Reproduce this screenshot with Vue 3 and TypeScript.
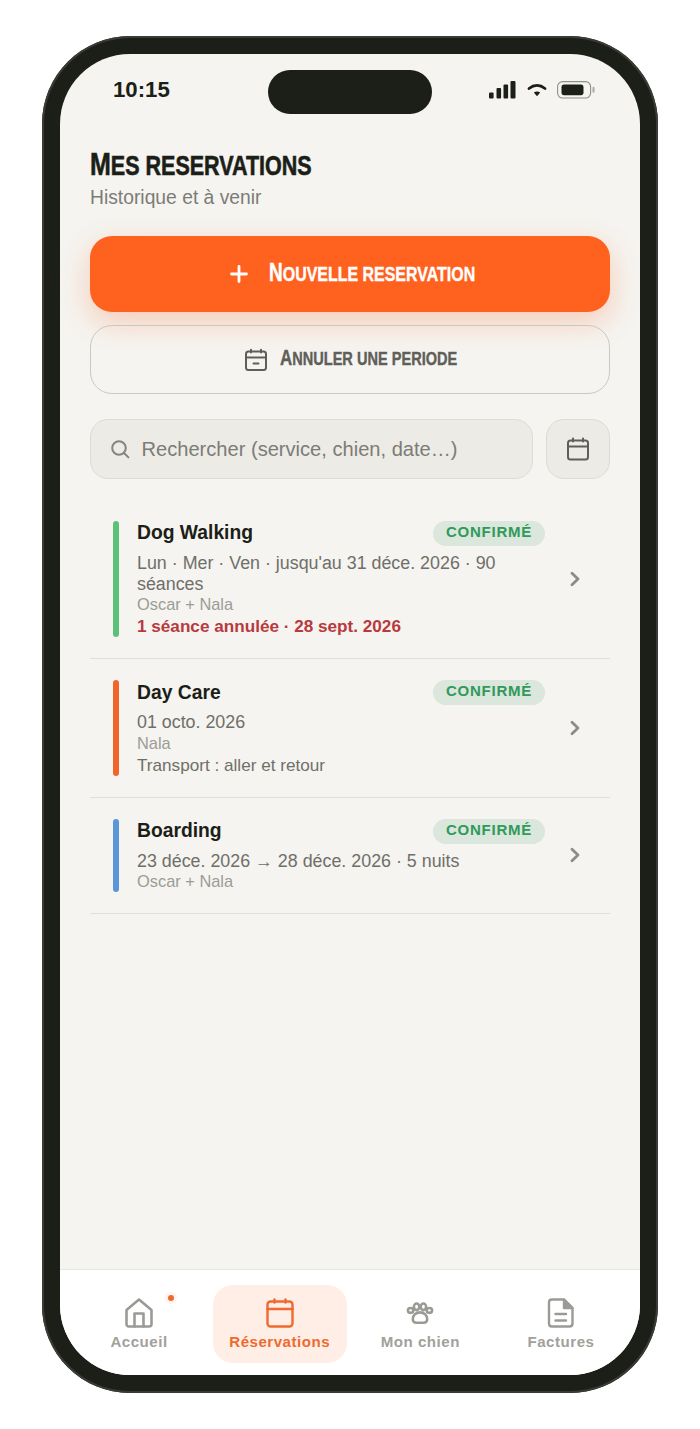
<script setup lang="ts">
interface Booking {
  title: string
  color: string
  lines: { text: string; kind: string }[]
}
const bookings: Booking[] = [
  {
    title: 'Dog Walking',
    color: '#5cc178',
    lines: [
      { text: "Lun · Mer · Ven · jusqu'au 31 déce. 2026 · 90 séances", kind: 'meta' },
      { text: 'Oscar + Nala', kind: 'dog' },
      { text: '1 séance annulée · 28 sept. 2026', kind: 'alert extra' },
    ],
  },
  {
    title: 'Day Care',
    color: '#f0662a',
    lines: [
      { text: '01 octo. 2026', kind: 'meta' },
      { text: 'Nala', kind: 'dog' },
      { text: 'Transport : aller et retour', kind: 'note extra' },
    ],
  },
  {
    title: 'Boarding',
    color: '#5b96d6',
    lines: [
      { text: '23 déce. 2026 → 28 déce. 2026 · 5 nuits', kind: 'meta' },
      { text: 'Oscar + Nala', kind: 'dog' },
    ],
  },
]
</script>

<template>
  <div class="page">
    <div class="phone">
      <div class="island"></div>
      <div class="screen">
        <div class="status">
          <span class="time">10:15</span>
          <div class="status-icons">
            <svg class="sig" width="28" height="18" viewBox="0 0 28 18" fill="#1c1e18">
              <rect x="0" y="11.5" width="4.6" height="6" rx="1" />
              <rect x="7.5" y="7" width="4.6" height="10.5" rx="1" />
              <rect x="14.5" y="3.5" width="4.6" height="14" rx="1" />
              <rect x="21.5" y="0" width="5" height="17.5" rx="1" />
            </svg>
            <svg class="wifi" width="20" height="14" viewBox="0 0 20 14" fill="none">
              <path d="M2 5.5C7 1.4 13 1.4 18 5.5" stroke="#1c1e18" stroke-width="2.8" stroke-linecap="round" />
              <path d="M10 13.2L6.8 9.4C8.8 8.2 11.2 8.2 13.2 9.4Z" fill="#1c1e18" />
            </svg>
            <svg class="batt" width="38" height="18" viewBox="0 0 38 18" fill="none">
              <rect x="0.6" y="0.6" width="33" height="16.4" rx="5" stroke="#8f8f8a" stroke-width="1.1" />
              <rect x="4.5" y="3.6" width="22" height="10.6" rx="2.6" fill="#1c1e18" />
              <rect x="35.5" y="5.8" width="2" height="6" rx="1" fill="#a9a9a4" />
            </svg>
          </div>
        </div>

        <header class="head">
          <h1 class="title"><span class="caps title-in">Mes reservations</span></h1>
          <p class="sub">Historique et à venir</p>
        </header>

        <button class="btn primary">
          <svg width="18" height="18" viewBox="0 0 18 18" fill="none" stroke="#fff" stroke-width="2.8" stroke-linecap="round">
            <path d="M9 1.5V16.5M1.5 9H16.5" />
          </svg>
          <span class="btn-label l1"><span class="caps b1">Nouvelle reservation</span></span>
        </button>

        <button class="btn secondary">
          <svg width="24" height="24" viewBox="0 0 24 24" fill="none" stroke="#5f5f59" stroke-width="2" stroke-linecap="round" stroke-linejoin="round">
            <rect x="2" y="3.5" width="20" height="18.5" rx="2.5" />
            <path d="M2 9.5H22M7 1.8V4.5M17 1.8V4.5M9.5 15.5H14.5" />
          </svg>
          <span class="btn-label l2"><span class="caps b2">Annuler une periode</span></span>
        </button>

        <div class="search-row">
          <div class="search">
            <svg width="20" height="20" viewBox="0 0 20 20" fill="none" stroke="#85857f" stroke-width="2" stroke-linecap="round">
              <circle cx="9" cy="9" r="6.8" />
              <path d="M14 14L18.4 18.4" />
            </svg>
            <span class="placeholder">Rechercher (service, chien, date…)</span>
          </div>
          <button class="cal-btn">
            <svg width="24" height="24" viewBox="0 0 24 24" fill="none" stroke="#5f5f59" stroke-width="2" stroke-linecap="round" stroke-linejoin="round">
              <rect x="2" y="3.5" width="20" height="19" rx="2.5" />
              <path d="M2 9.5H22M7 1.5V4.5M17 1.5V4.5" />
            </svg>
          </button>
        </div>

        <ul class="list">
          <li v-for="b in bookings" :key="b.title" class="row">
            <span class="bar" :style="{ background: b.color }"></span>
            <div class="body">
              <div class="row-top">
                <span class="name">{{ b.title }}</span>
                <span class="badge">CONFIRMÉ</span>
              </div>
              <div v-for="l in b.lines" :key="l.text" :class="['line', l.kind]">{{ l.text }}</div>
            </div>
            <svg class="chev" width="12" height="16" viewBox="0 0 12 16" fill="none" stroke="#8d8d87" stroke-width="2.8" stroke-linecap="round" stroke-linejoin="round">
              <path d="M3 2.2L9 8L3 13.8" />
            </svg>
          </li>
        </ul>

        <div class="spacer"></div>

        <nav class="nav">
          <div class="tab">
            <span class="dot"></span>
            <svg width="30" height="30" viewBox="0 0 30 30" fill="none" stroke="#9b9b96" stroke-width="2.6" stroke-linejoin="round" stroke-linecap="round">
              <path d="M2.5 12L15 1.5L27.5 12V26C27.5 27.6 26.5 28.5 25 28.5H5C3.5 28.5 2.5 27.6 2.5 26Z" />
              <path d="M10.5 28.5V15.5H19.5V28.5" />
            </svg>
            <span class="tab-label">Accueil</span>
          </div>
          <div class="tab active">
            <svg width="30" height="30" viewBox="0 0 30 30" fill="none" stroke="#ee6a2e" stroke-width="2.4" stroke-linejoin="round" stroke-linecap="round">
              <rect x="2.5" y="3.5" width="25" height="25" rx="3" />
              <path d="M2.5 11H27.5M9.5 1.5V4.5M20.5 1.5V4.5" />
            </svg>
            <span class="tab-label">Réservations</span>
          </div>
          <div class="tab">
            <svg width="30" height="30" viewBox="0 0 30 30" fill="none" stroke="#9b9b96" stroke-width="2.6" stroke-linejoin="round">
              <ellipse cx="5.6" cy="12.4" rx="2.7" ry="2.4" />
              <ellipse cx="11.6" cy="8.8" rx="2.7" ry="3.3" />
              <ellipse cx="18.4" cy="8.8" rx="2.7" ry="3.3" />
              <ellipse cx="24.4" cy="12.4" rx="2.7" ry="2.4" />
              <path d="M15 14.4C19.4 14.4 22.2 17.6 22.2 21C22.2 23.4 20.6 24.8 18.4 24.8H11.6C9.4 24.8 7.8 23.4 7.8 21C7.8 17.6 10.6 14.4 15 14.4Z" />
            </svg>
            <span class="tab-label">Mon chien</span>
          </div>
          <div class="tab">
            <svg width="30" height="30" viewBox="0 0 30 30" fill="none" stroke="#9b9b96" stroke-width="2.4" stroke-linejoin="round" stroke-linecap="round">
              <path d="M6 1.5H18L26.5 10V25.5C26.5 27.4 25.4 28.5 23.5 28.5H6C4.1 28.5 3 27.4 3 25.5V4.5C3 2.6 4.1 1.5 6 1.5Z" />
              <path d="M18 1.5V10H26.5Z" fill="#9b9b96" />
              <path d="M9.5 16H20M9.5 22.5H20" />
            </svg>
            <span class="tab-label">Factures</span>
          </div>
        </nav>
      </div>
    </div>
  </div>
</template>

<style>
html,
body {
  margin: 0;
  background: #ffffff;
}
</style>

<style scoped>
.page {
  width: 700px;
  height: 1429px;
  padding: 36px 42px 0;
  box-sizing: border-box;
  font-family: "Liberation Sans", Arial, sans-serif;
}
.phone {
  position: relative;
  width: 616px;
  height: 1357px;
  box-sizing: border-box;
  padding: 18px;
  border-radius: 88px;
  background: #1c1e18;
  box-shadow: inset 0 0 0 2px #3a3b36;
}
.island {
  position: absolute;
  left: 226px;
  top: 34px;
  width: 164px;
  height: 44px;
  border-radius: 22px;
  background: #1c1e18;
}
.screen {
  display: flex;
  flex-direction: column;
  height: 100%;
  border-radius: 70px;
  overflow: hidden;
  background: #f5f4f0;
}
.status {
  display: flex;
  align-items: center;
  justify-content: space-between;
  height: 71px;
  padding: 0 45px 0 53px;
  flex: none;
}
.time {
  font-size: 22.2px;
  font-weight: 700;
  color: #1c1e18;
}
.status-icons {
  display: flex;
  align-items: center;
  gap: 10px;
}
.caps {
  display: inline-block;
  text-transform: uppercase;
  font-weight: 700;
  -webkit-text-stroke: 0.4px currentColor;
  transform-origin: left center;
  white-space: nowrap;
}
.head {
  padding: 22px 30px 0;
}
.title {
  margin: 0;
  height: 34px;
  line-height: 34px;
  color: #1c1e18;
  font-size: 27.5px;
  font-weight: 700;
}
.title-in {
  transform: scaleX(0.782);
  -webkit-text-stroke: 0.6px currentColor;
}
.title-in::first-letter {
  font-size: 32px;
}
.sub {
  margin: 5px 0 0;
  font-size: 19.3px;
  line-height: 24px;
  color: #7c7c76;
}
.btn {
  display: flex;
  align-items: center;
  justify-content: center;
  box-sizing: border-box;
  width: 520.5px;
  margin: 0 29.5px;
  border-radius: 22px;
  font-family: inherit;
  flex: none;
}
.primary {
  height: 76px;
  margin-top: 26px;
  gap: 21px;
  padding: 0 0 0 6px;
  border: 0;
  background: #ff611f;
  box-shadow: 0 10px 30px rgba(255, 97, 31, 0.28);
  color: #fff;
}
.secondary {
  height: 69px;
  margin-top: 13px;
  gap: 12px;
  padding: 0 0 0 1px;
  border: 1.5px solid #c9c9c3;
  background: transparent;
  color: #5f5f59;
}
.btn-label {
  display: block;
  text-align: left;
  flex: none;
}
.l1 {
  width: 206px;
  line-height: 30px;
}
.l2 {
  width: 177px;
  line-height: 26px;
}
.b1 {
  font-size: 21px;
  transform: scaleX(0.76);
}
.b1::first-letter {
  font-size: 25px;
}
.b2 {
  font-size: 18.5px;
  transform: scaleX(0.787);
}
.b2::first-letter {
  font-size: 21.5px;
}
.search-row {
  display: flex;
  gap: 13px;
  margin: 25px 30px 0 29.5px;
  flex: none;
}
.search {
  display: flex;
  align-items: center;
  gap: 12px;
  flex: 1;
  height: 60px;
  box-sizing: border-box;
  padding-left: 19px;
  border: 1.5px solid #dcdcd6;
  border-radius: 18px;
  background: #ecebe6;
}
.placeholder {
  font-size: 20.1px;
  color: #7c7c76;
}
.cal-btn {
  display: flex;
  align-items: center;
  justify-content: center;
  width: 64px;
  height: 60px;
  padding: 0;
  box-sizing: border-box;
  border: 1.5px solid #dcdcd6;
  border-radius: 18px;
  background: #ecebe6;
}
.list {
  list-style: none;
  margin: 20.5px 30px 0 29.5px;
  padding: 0;
}
.row {
  display: flex;
  align-items: center;
  padding: 21px 29.5px 21px 23.5px;
  border-bottom: 1px solid #dededa;
}
.bar {
  align-self: stretch;
  flex: none;
  width: 6px;
  border-radius: 3px;
}
.body {
  flex: 1;
  min-width: 0;
  margin-left: 18px;
  margin-right: 23.5px;
}
.row-top {
  display: flex;
  align-items: center;
  justify-content: space-between;
  height: 25px;
  margin-bottom: 7px;
}
.name {
  font-size: 19.3px;
  font-weight: 700;
  color: #1c1e18;
}
.badge {
  padding: 0 13px;
  height: 25px;
  line-height: 22px;
  border-radius: 13px;
  background: #dbe6dc;
  color: #2f9a5a;
  font-size: 15px;
  font-weight: 700;
  letter-spacing: 0.75px;
}
.line {
  line-height: 21px;
}
.extra {
  margin-top: 1px;
}
.meta {
  font-size: 17.85px;
  color: #6f6f69;
}
.note {
  font-size: 17.15px;
  color: #6f6f69;
}
.dog {
  margin-top: -0.5px;
  font-size: 16.4px;
  color: #9c9c96;
}
.alert {
  font-size: 17.15px;
  font-weight: 700;
  color: #b8393e;
}
.chev {
  flex: none;
}
.spacer {
  flex: 1;
}
.nav {
  display: grid;
  grid-template-columns: repeat(4, 134px);
  justify-content: space-between;
  flex: none;
  height: 106px;
  box-sizing: border-box;
  padding: 15px 12px 12px;
  border-top: 1.5px solid #e6e6e1;
  background: #fff;
}
.tab {
  position: relative;
  display: flex;
  flex-direction: column;
  align-items: center;
  justify-content: center;
  gap: 5px;
  border-radius: 20px;
}
.tab.active {
  background: #ffeee6;
}
.tab-label {
  font-size: 15.1px;
  font-weight: 700;
  letter-spacing: 0.5px;
  color: #a1a19c;
}
.active .tab-label {
  color: #ee6a2e;
}
.dot {
  position: absolute;
  left: 96px;
  top: 10px;
  width: 6px;
  height: 6px;
  border-radius: 50%;
  background: #ee6a2e;
  box-shadow: 0 0 0 3px #fff3ee;
}
</style>
